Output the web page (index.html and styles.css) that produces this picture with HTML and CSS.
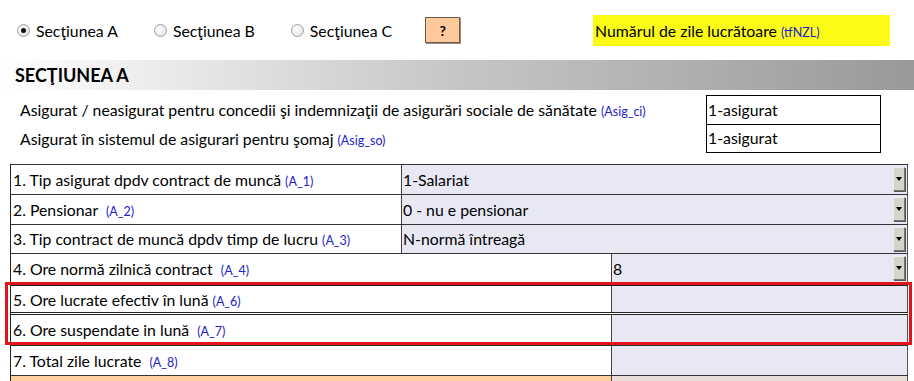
FILE: index.html
```html
<!DOCTYPE html>
<html lang="ro">
<head>
    <meta charset="UTF-8">
    <meta name="viewport" content="width=device-width, initial-scale=1.0">
    <title>Secţiunea A</title>
    <link rel="stylesheet" href="styles.css">
</head>
<body>
    <!-- Section selector -->
    <div class="topbar">
        <label class="radio radio-a"><span class="dot checked"></span>Secţiunea A</label>
        <label class="radio radio-b"><span class="dot"></span>Secţiunea B</label>
        <label class="radio radio-c"><span class="dot"></span>Secţiunea C</label>
        <button class="help-btn">?</button>
        <div class="zile">Numărul de zile lucrătoare <span class="tag">(tfNZL)</span></div>
    </div>

    <div class="section-head">SECŢIUNEA A</div>

    <!-- Asigurare -->
    <div class="asig">
        <div class="asig-row">
            <span class="asig-label">Asigurat / neasigurat pentru concedii şi indemnizaţii de asigurări sociale de sănătate <span class="tag">(Asig_ci)</span></span>
            <div class="asig-box">1-asigurat</div>
        </div>
        <div class="asig-row">
            <span class="asig-label">Asigurat în sistemul de asigurari pentru şomaj <span class="tag">(Asig_so)</span></span>
            <div class="asig-box second">1-asigurat</div>
        </div>
    </div>

    <!-- Campuri A -->
    <div class="grid">
        <div class="row wide">
            <div class="lbl">1. Tip asigurat dpdv contract de muncă <span class="tag">(A_1)</span></div>
            <div class="val">1-Salariat<span class="drop"></span></div>
        </div>
        <div class="row wide">
            <div class="lbl">2. Pensionar &nbsp;<span class="tag">(A_2)</span></div>
            <div class="val">0 - nu e pensionar<span class="drop"></span></div>
        </div>
        <div class="row wide short">
            <div class="lbl">3. Tip contract de muncă dpdv timp de lucru <span class="tag">(A_3)</span></div>
            <div class="val">N-normă întreagă<span class="drop"></span></div>
        </div>
        <div class="row">
            <div class="lbl">4. Ore normă zilnică contract &nbsp;<span class="tag">(A_4)</span></div>
            <div class="val">8<span class="drop"></span></div>
        </div>
        <!-- rows marked with the red frame -->
        <div class="marked">
            <div class="row double">
                <div class="lbl">5. Ore lucrate efectiv în lună <span class="tag">(A_6)</span></div>
                <div class="val"></div>
            </div>
            <div class="row double tall">
                <div class="lbl">6. Ore suspendate in lună &nbsp;<span class="tag">(A_7)</span></div>
                <div class="val"></div>
            </div>
        </div>
        <div class="row">
            <div class="lbl">7. Total zile lucrate &nbsp;<span class="tag">(A_8)</span></div>
            <div class="val"></div>
        </div>
        <div class="row total">
            <div class="lbl"></div>
            <div class="val"></div>
        </div>
    </div>
</body>
</html>
```

FILE: styles.css
```css
body {
    font-family: Lato, "Open Sans", sans-serif;
    font-size: 15.8px;
    color: #000;
    background-color: #fff;
    margin: 0;
    padding: 0;
    height: 381px;
    overflow: hidden;
}

.tag {
    color: #2222c8;
    font-size: 12.5px;
}

/* top bar */
.topbar {
    display: flex;
    align-items: center;
    height: 60px;
}

.radio {
    display: flex;
    align-items: center;
    gap: 6px;
}

.radio-a {
    margin-left: 17px;
}

.radio-b {
    margin-left: 36px;
}

.radio-c {
    margin-left: 36px;
}

.dot {
    width: 11px;
    height: 11px;
    border-radius: 50%;
    border: 1px solid #a0a0a0;
    background: radial-gradient(circle at 40% 40%, #ffffff, #dcdcdc);
    position: relative;
}

.dot.checked::after {
    content: "";
    position: absolute;
    left: 3px;
    top: 3px;
    width: 5px;
    height: 5px;
    border-radius: 50%;
    background-color: #111;
}

.help-btn {
    margin-left: 33px;
    width: 35px;
    height: 26px;
    background-color: #fdc99d;
    border: 1px solid #6b5a4a;
    box-shadow: 1px 1px 0 #9c8a7a;
    font-family: inherit;
    font-weight: bold;
    font-size: 14px;
    padding: 0;
}

.zile {
    margin-left: 133px;
    width: 295px;
    height: 31px;
    line-height: 31px;
    padding-left: 2px;
    background-color: #fbfb16;
}

/* section header */
.section-head {
    height: 30px;
    line-height: 30px;
    padding-left: 15px;
    font-size: 18px;
    font-weight: bold;
    background: linear-gradient(to right, #ffffff 0%, #c6c6c6 50%, #999999 100%);
}

/* insurance rows */
.asig {
    padding-top: 5px;
    padding-left: 20px;
}

.asig-row {
    display: flex;
    align-items: center;
    height: 29px;
}

.asig-label {
    width: 686px;
}

.asig-box {
    width: 172px;
    height: 28px;
    line-height: 28px;
    border: 1px solid #000;
    padding-left: 1px;
}

.asig-box.second {
    border-top: 0;
}

/* grid */
.grid {
    margin-top: 11px;
    margin-left: 10px;
    width: 897px;
    border-left: 1px solid #222;
}

.row {
    display: flex;
    height: 29px;
    line-height: 29px;
    border-top: 1px solid #333;
}

.row.short {
    height: 28px;
    line-height: 28px;
}

.lbl {
    width: 598px;
    padding-left: 2px;
    white-space: nowrap;
    background-color: #fff;
    border-right: 1px solid #444;
}

.row.wide .lbl {
    width: 388px;
}

.val {
    flex: 1;
    position: relative;
    padding-left: 1px;
    background-color: #e8e8f4;
    border-right: 1px solid #555;
}

.drop {
    position: absolute;
    right: 2px;
    top: 2px;
    width: 10px;
    height: 22px;
    background-color: #d6d3cb;
    border: 1px solid #777;
    border-top-color: #eee;
    border-left-color: #eee;
    box-shadow: 1px 1px 0 #555;
}

.drop::after {
    content: "";
    position: absolute;
    left: 2px;
    top: 9px;
    border-left: 3px solid transparent;
    border-right: 3px solid transparent;
    border-top: 4px solid #000;
}

.marked {
    position: relative;
}

.marked::after {
    content: "";
    position: absolute;
    left: -6px;
    right: -4px;
    top: -1px;
    bottom: 0;
    border: 3px solid #e0141a;
    pointer-events: none;
}

.row.double {
    border-top: 3px double #222;
    height: 26px;
    line-height: 28px;
}

.row.double.tall {
    height: 30px;
    line-height: 30px;
}

.row.total .lbl {
    background-color: #fdcf9f;
}

.row.total .val {
    background-color: #e9ddd8;
}
```
